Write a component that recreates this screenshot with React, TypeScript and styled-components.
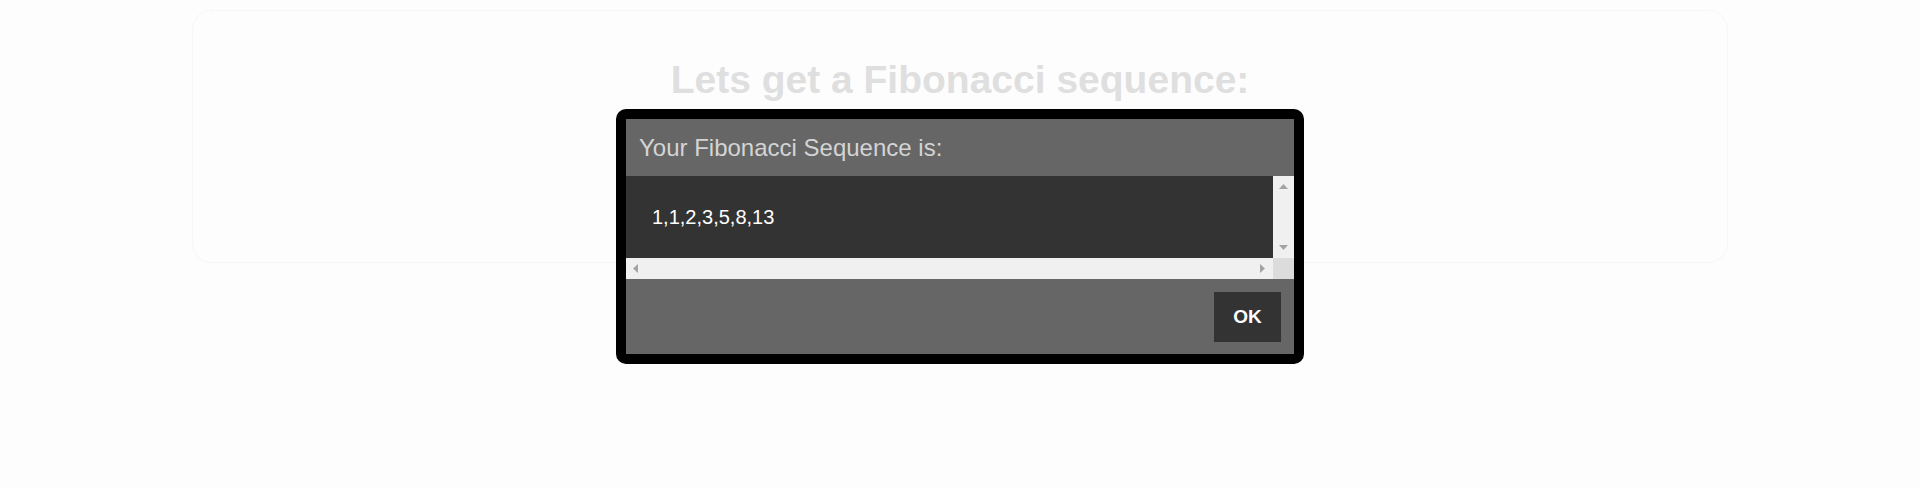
import React from "react";
import styled, { createGlobalStyle } from "styled-components";

const Global = createGlobalStyle`
  html, body {
    margin: 0;
    padding: 0;
    background: #fdfdfd;
    font-family: "Liberation Sans", Arial, sans-serif;
  }
`;

const Page = styled.div`
  height: 488px;
  padding-top: 10px;
  box-sizing: border-box;
`;

const Card = styled.section`
  margin: 0 auto;
  width: 80%;
  height: 253px;
  box-sizing: border-box;
  border: 1px dotted #efefef;
  border-radius: 20px;
  padding-top: 46px;
`;

const Title = styled.h1`
  margin: 0;
  text-align: center;
  font-size: 39px;
  font-weight: bold;
  color: #dfdfdf;
  line-height: 45px;
`;

const Dialog = styled.div`
  position: fixed;
  top: 109px;
  left: 50%;
  transform: translateX(-50%);
  width: 688px;
  box-sizing: border-box;
  border: 10px solid #000;
  border-radius: 10px;
  background: #666666;
  overflow: hidden;
`;

const Header = styled.div`
  height: 57px;
  display: flex;
  align-items: center;
  padding: 0 13px;
  font-size: 24px;
  color: #d4d4d4;
`;

const Body = styled.div`
  display: grid;
  grid-template-columns: 1fr 21px;
  grid-template-rows: 82px 21px;
`;

const Content = styled.div`
  background: #333333;
  color: #ffffff;
  font-size: 20px;
  display: flex;
  align-items: center;
  padding-left: 26px;
`;

const Track = styled.div<{ $vertical?: boolean }>`
  background: #f0f0f0;
  display: flex;
  flex-direction: ${(p) => (p.$vertical ? "column" : "row")};
  justify-content: space-between;
  align-items: center;
  padding: ${(p) => (p.$vertical ? "8px 0 8px" : "0 8px 0 7px")};
  box-sizing: border-box;
`;

const Corner = styled.div`
  background: #dcdcdc;
`;

const Footer = styled.div`
  height: 75px;
  display: flex;
  justify-content: flex-end;
  align-items: center;
  padding: 0 13px;
`;

const OkButton = styled.button`
  width: 67px;
  height: 50px;
  margin-top: 1px;
  border: none;
  background: #333333;
  color: #ffffff;
  font-family: "Liberation Sans", Arial, sans-serif;
  font-weight: bold;
  font-size: 19px;
  padding: 0;
  cursor: pointer;
`;

type Dir = "up" | "down" | "left" | "right";
const Arrow = ({ dir }: { dir: Dir }) => {
  const pts: Record<Dir, string> = {
    up: "0,5 9,5 4.5,0",
    down: "0,0 9,0 4.5,5",
    left: "5,0 5,9 0,4.5",
    right: "0,0 0,9 5,4.5",
  };
  const vert = dir === "up" || dir === "down";
  return (
    <svg width={vert ? 9 : 5} height={vert ? 5 : 9} style={{ display: "block" }}>
      <polygon points={pts[dir]} fill="#a3a3a3" />
    </svg>
  );
};

export default function App() {
  return (
    <>
      <Global />
      <Page>
        <Card>
          <Title>Lets get a Fibonacci sequence:</Title>
        </Card>
      </Page>
      <Dialog>
        <Header>Your Fibonacci Sequence is:</Header>
        <Body>
          <Content>1,1,2,3,5,8,13</Content>
          <Track $vertical>
            <Arrow dir="up" />
            <Arrow dir="down" />
          </Track>
          <Track>
            <Arrow dir="left" />
            <Arrow dir="right" />
          </Track>
          <Corner />
        </Body>
        <Footer>
          <OkButton>OK</OkButton>
        </Footer>
      </Dialog>
    </>
  );
}
